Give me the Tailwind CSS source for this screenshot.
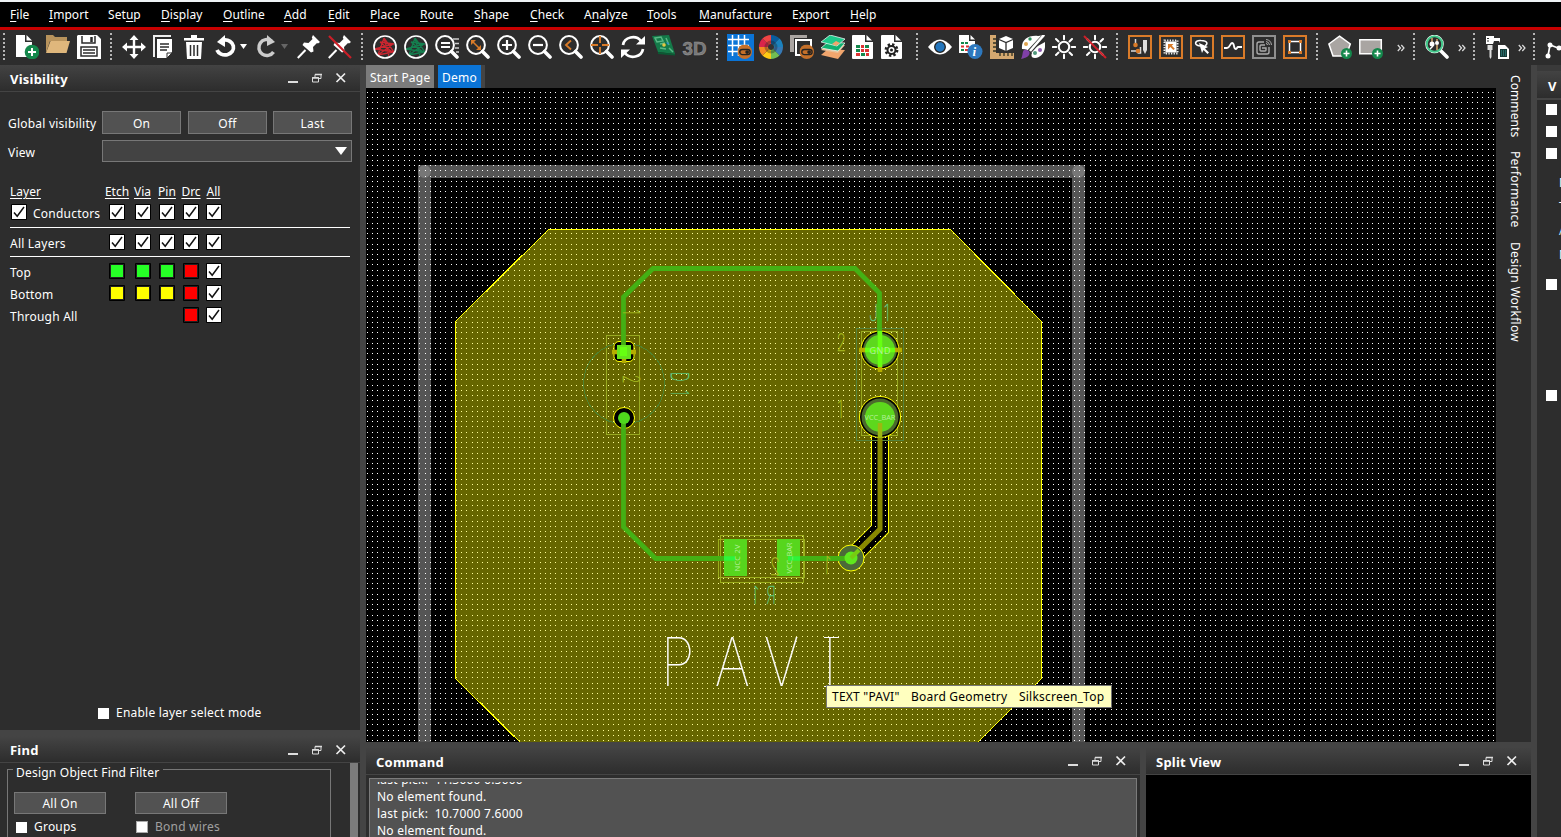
<!DOCTYPE html>
<html lang="en">
<head>
<meta charset="utf-8">
<title>PCB Editor</title>
<script src="https://cdn.jsdelivr.net/npm/@tailwindcss/browser@4"></script>
</head>
<body class="w-[1561px] h-[837px] overflow-hidden bg-[#2d2d2d] text-white text-[12px] leading-[16px] tracking-[0.22px] font-['Noto_Sans','Open_Sans',sans-serif] flex flex-col whitespace-nowrap">

<svg class="hidden">
  <symbol id="chk" viewBox="0 0 16 16"><rect width="16" height="16" rx="1" fill="#000"/><rect x="1" y="1" width="14" height="14" fill="#fff"/><path d="M3 8.500L6.200 12.300L13 3" fill="none" stroke="#111" stroke-width="1.500"/></symbol>
  <symbol id="cg" viewBox="0 0 16 16"><rect width="16" height="16" rx="1"/><rect x="1" y="1" width="14" height="14" fill="#222"/><rect x="2" y="2" width="12" height="12" fill="#26ff26"/></symbol>
  <symbol id="cy" viewBox="0 0 16 16"><rect width="16" height="16" rx="1"/><rect x="1" y="1" width="14" height="14" fill="#222"/><rect x="2" y="2" width="12" height="12" fill="#ff0"/></symbol>
  <symbol id="cr" viewBox="0 0 16 16"><rect width="16" height="16" rx="1"/><rect x="1" y="1" width="14" height="14" fill="#222"/><rect x="2" y="2" width="12" height="12" fill="#f00"/></symbol>
  <symbol id="wc" viewBox="0 0 60 14"><path d="M1 11h10" stroke="#ddd" stroke-width="2"/><path d="M28 3.500h6v4h-6z" fill="none" stroke="#ddd"/><path d="M25.500 6.500h6v4.500h-6z" fill="#333" stroke="#ddd"/><path d="M25 7h7M28 3.500h7" stroke="#ddd" stroke-width="1.500"/><path d="M49.500 2.500l8.500 8.500M58 2.500l-8.500 8.500" stroke="#eee" stroke-width="1.700"/></symbol>
  <symbol id="lens" viewBox="0 0 24 24"><circle cx="10" cy="10" r="8.900" fill="none" stroke="#fff" stroke-width="2"/><path d="M16.500 16.500l5.500 5.500" stroke="#fff" stroke-width="3.600" stroke-linecap="round"/></symbol>
  <symbol id="rats" viewBox="0 0 24 24"><path d="M11 3L5 20L20 9L2 14L21 17L11 3L16 21M7 7l14 2M7 7l12 10M5 20l15-3" fill="none" stroke="currentColor" stroke-width="1.300"/><circle cx="12" cy="12" r="11" fill="none" stroke="#fff" stroke-width="1.700"/></symbol>
  <symbol id="pin" viewBox="0 0 24 24"><path d="M16 0l7 7-2 1.500-1-.5-4 4 .5 4.500-2.500 1L5.500 10 7 7.500l4.500.5 4-4-.7-1.500z" fill="#fff"/><path d="M8.500 15L.8 23" stroke="#fff" stroke-width="2"/></symbol>
  <symbol id="doc" viewBox="0 0 24 24"><path d="M2 0h11v7h8v16q0 1-1 1H1q-1 0-1-1V1q0-1 1-1z" fill="#fff"/><path d="M14.500 0v5.500H20z" fill="#fff"/></symbol>
  <symbol id="plus" viewBox="0 0 12 12"><circle cx="6" cy="6" r="5.500" fill="#14884c"/><path d="M6 3v6M3 6h6" stroke="#fff" stroke-width="1.600"/></symbol>
  <symbol id="eye" viewBox="0 0 14 14"><circle cx="7" cy="7" r="7" fill="#c4702a"/><rect x="2.200" y="4.800" width="10" height="5" rx="2.500" fill="#c4702a" stroke="#222" stroke-width="1.300"/><circle cx="9.300" cy="7.300" r="1.800" fill="#222"/></symbol>
  <symbol id="sun" viewBox="0 0 24 24"><circle cx="12" cy="12" r="5.200" fill="#2d2d2d" stroke="#fff" stroke-width="2"/><path d="M12 .8v3.500M12 19.700v3.500M.8 12h3.500M19.700 12h3.500M4 4l2.500 2.500M17.500 17.500L20 20M20 4l-2.500 2.500M6.500 17.500L4 20" stroke="#fff" stroke-width="2" stroke-linecap="round"/></symbol>
  <symbol id="more" viewBox="0 0 8 8"><path d="M.8 1L3.500 4 .8 7M4.300 1L7 4 4.300 7" fill="none" stroke="#ddd" stroke-width="1.200"/></symbol>
</svg>

<div class="h-[2px] bg-[#eef2f5] shrink-0"></div>
<nav class="h-[25px] bg-black shrink-0 flex items-center pl-[10px] tracking-[0.06px] [&_u]:underline-offset-2">
  <span class="w-[39px]"><u>F</u>ile</span><span class="w-[59px]"><u>I</u>mport</span><span class="w-[53px]">Set<u>u</u>p</span><span class="w-[62px]"><u>D</u>isplay</span><span class="w-[61px]"><u>O</u>utline</span><span class="w-[44px]"><u>A</u>dd</span><span class="w-[42px]"><u>E</u>dit</span><span class="w-[50px]"><u>P</u>lace</span><span class="w-[54px]"><u>R</u>oute</span><span class="w-[56px]"><u>S</u>hape</span><span class="w-[54px]"><u>C</u>heck</span><span class="w-[63px]">A<u>n</u>alyze</span><span class="w-[52px]"><u>T</u>ools</span><span class="w-[93px]"><u>M</u>anufacture</span><span class="w-[58px]">E<u>x</u>port</span><span><u>H</u>elp</span>
</nav>
<div class="h-[3px] bg-[#c80000] shrink-0"></div>

<!-- Toolbar -->
<div class="h-[35px] shrink-0 flex pl-[3px] pt-[3px] overflow-hidden [&>div]:shrink-0 [&>div]:flex [&>div]:gap-[7px] [&>div]:pl-[10px] [&>div]:h-[27px] [&>div]:border-l-2 [&>div]:border-dotted [&>div]:border-[#b5b5b5] [&_svg]:shrink-0 [&_svg]:mt-[2px]">
  <div class="w-[107px]">
    <svg width="24" height="24"><path d="M1 0h9v7h7v15H1z" fill="#fff"/><path d="M11.500 0v5.500H17z" fill="#fff"/><circle cx="17" cy="17" r="7.300" fill="#14884c"/><path d="M17 13v8M13 17h8" stroke="#fff" stroke-width="2"/></svg>
    <svg width="24" height="24"><path d="M0 18V0h7l2 2h12v4H4z" fill="#b8935c"/><path d="M4.500 6H24l-3.500 12H0z" fill="#dfb77c"/></svg>
    <svg width="24" height="24"><path d="M1 0h19l4 4v20H0V1z" fill="#fff"/><path d="M5 1v7h13V1" fill="#fff" stroke="#2d2d2d" stroke-width="1.500"/><path d="M14.500 2v5" stroke="#2d2d2d" stroke-width="2.500"/><path d="M4 12h16v9H4z" fill="#fff" stroke="#2d2d2d" stroke-width="1.500"/><path d="M6 15h12M6 18h12" stroke="#2d2d2d" stroke-width="1.500"/></svg>
  </div>
  <div class="w-[251px]">
    <svg width="24" height="24" viewBox="0 0 24 24"><path d="M12 3v18M3 12h18" stroke="#fff" stroke-width="2.400"/><path d="M12 0l4.500 5h-9zM12 24l4.500-5h-9zM0 12l5-4.500v9zM24 12l-5-4.500v9z" fill="#fff"/></svg>
    <svg width="24" height="24"><path d="M1 22V1h17" fill="none" stroke="#eee" stroke-width="2"/><path d="M4 4h15v13l-5 6H4z" fill="#fff"/><path d="M7 9h9M7 12h9M7 15h7" stroke="#2d2d2d" stroke-width="1.500"/><path d="M14 18h5l-5 5z" fill="#fff" stroke="#2d2d2d"/></svg>
    <svg width="24" height="24"><path d="M0 3h20v2.500H0zM7 0h6v3H7z" fill="#fff"/><path d="M2 7h16l-1 17H3z" fill="#fff"/><path d="M6.500 10v11M10 10v11M13.500 10v11" stroke="#2d2d2d" stroke-width="1.500"/></svg>
    <svg width="34" height="24"><path d="M2 15a8.500 7.500 0 1 0 7-10" fill="none" stroke="#fff" stroke-width="3.700"/><path d="M2 7L10 0v12z" fill="#fff"/><path d="M25 9h7l-3.500 5z" fill="#fff"/></svg>
    <svg width="34" height="24"><path d="M17.500 17a8 8 0 1 1-2-11" fill="none" stroke="#ccc" stroke-width="3.500"/><path d="M19 7l-8-7v11z" fill="#ccc"/><path d="M25 9h7l-3.500 5z" fill="#666"/></svg>
    <svg width="24" height="24"><use href="#pin"/></svg>
    <svg width="24" height="24"><use href="#pin"/><path d="M1 1l22 22" stroke="#cc1f28" stroke-width="2.200"/></svg>
  </div>
  <div class="w-[355px]">
    <svg width="24" height="24" class="text-[#cc2630]"><use href="#rats"/></svg>
    <svg width="24" height="24" class="text-[#14804f]"><use href="#rats"/></svg>
    <svg width="24" height="24"><use href="#lens"/><path d="M6 8h9M6 12h9" stroke="#fff" stroke-width="2"/><path d="M18 4h6M20 8.500h4M20 13h4M21 17h3" stroke="#ccc" stroke-width="1.300"/></svg>
    <svg width="24" height="24"><use href="#lens"/><path d="M6 6l8 8" stroke="#d97b29" stroke-width="1.600"/><path d="M5 5h5l-5 5zM15 15h-5l5-5z" fill="#d97b29"/></svg>
    <svg width="24" height="24"><use href="#lens"/><path d="M10 5v10M5 10h10" stroke="#fff" stroke-width="2.200"/></svg>
    <svg width="24" height="24"><use href="#lens"/><path d="M5 10h10" stroke="#fff" stroke-width="2.200"/></svg>
    <svg width="24" height="24"><use href="#lens"/><path d="M12 5.500L7 10l5 4.500" fill="none" stroke="#d97b29" stroke-width="1.900"/></svg>
    <svg width="24" height="24"><use href="#lens"/><path d="M10 1v7M10 12v7M1 10h7M12 10h7" stroke="#d97b29" stroke-width="1.900"/></svg>
    <svg width="24" height="24"><path d="M2 10A10 9 0 0 1 20 6M22 14A10 9 0 0 1 4 18" fill="none" stroke="#fff" stroke-width="2.700"/><path d="M24 1v8.500h-9zM0 23v-8.500h9z" fill="#fff"/></svg>
    <svg width="24" height="24"><path d="M0 1L17 0l6 19L6 17z" fill="#147a49"/><path d="M6 17l17 2v1.500L6 19z" fill="#0a5a33"/><path d="M3 3l6-1 2 4-6 1zM8 9l5-1M14 3l3 7M17 13l4 4M8 13l6 1" fill="none" stroke="#59b885" stroke-width="1.500"/><circle cx="12" cy="10" r="1.800" fill="#e8c640"/><path d="M14 7l3 1-1 2z" fill="#2a8fd0"/></svg>
    <svg width="24" height="24" class="overflow-visible"><text x="-.5" y="20" font-family="Liberation Sans" font-weight="700" font-size="19" letter-spacing="0" textLength="24" lengthAdjust="spacingAndGlyphs" fill="#777" stroke="#999" stroke-width=".5">3D</text></svg>
  </div>
  <div class="w-[200px]">
    <svg width="24" height="24" class="overflow-visible"><rect x="-1" y="-1" width="27" height="27" fill="#0b74d6"/><path d="M4.500 0v21M10.500 0v21M16.500 0v11M0 4.500h21M0 10.500h21M0 16.500h11" stroke="#fff" stroke-width="1.500"/><use href="#eye" x="9.500" y="9.500" width="14.500" height="14.500"/></svg>
    <svg width="24" height="24" viewBox="-12 -12 24 24"><path d="M0 0V-12A12 12 0 0 1 8.500-8.500z" fill="#0a5c9c"/><path d="M0 0L8.500-8.500A12 12 0 0 1 12 0z" fill="#1b82be"/><path d="M0 0H12A12 12 0 0 1 8.500 8.500z" fill="#3679b5"/><path d="M0 0L8.500 8.500A12 12 0 0 1 0 12z" fill="#72bd54"/><path d="M0 0V12A12 12 0 0 1-8.500 8.500z" fill="#ffc914"/><path d="M0 0L-8.500 8.500A12 12 0 0 1-12 0z" fill="#f58a24"/><path d="M0 0H-12A12 12 0 0 1-8.500-8.500z" fill="#d9254a"/><path d="M0 0L-8.500-8.500A12 12 0 0 1 0-12z" fill="#ef4444"/><circle r="5" fill="none" stroke="#222" stroke-opacity=".35" stroke-width="3"/><circle r="3" fill="#333"/></svg>
    <svg width="24" height="24" class="overflow-visible"><path d="M0 0h17v17H0z" fill="#aaa5a2"/><path d="M4 3h18v18H4z" fill="#2d2d2d"/><path d="M6 5h15v15H6z" fill="#2d2d2d" stroke="#fff" stroke-width="2"/><use href="#eye" x="9.500" y="9.500" width="14.500" height="14.500"/></svg>
    <svg width="24" height="24"><path d="M0 20l7-6 17 1-7 9z" fill="#f0a56d"/><path d="M0 15l7-6 17 1-7 8z" fill="#e8c098"/><path d="M0 13l7-6 17 1-7 8z" fill="#10b070" stroke="#fff" stroke-width=".7"/><path d="M0 7l9-7 15 4-8 7z" fill="#1ec98b" stroke="#fff" stroke-width=".7"/><path d="M11 9l4-3 4 2-4 3z" fill="#f0a56d"/></svg>
    <svg width="24" height="24"><use href="#doc"/><path d="M4 10h4v3H4zM13 10h4v3h-4zM4 14h4v3H4zM9 18h4v3H9z" fill="#14884c"/><path d="M9 10h3v3H9zM9 14h3v3H9zM13 14h4v3h-4zM4 18h4v3H4zM14 18h3v3h-3z" fill="#d33"/></svg>
    <svg width="24" height="24" class="overflow-visible"><g transform="translate(-2 0)"><use href="#doc" width="24" height="24"/><circle cx="10.500" cy="15" r="5.500" fill="none" stroke="#222" stroke-width="2.800" stroke-dasharray="2.300 2"/><circle cx="10.500" cy="15" r="4" fill="none" stroke="#222" stroke-width="2"/><circle cx="10.500" cy="15" r="1.500" fill="#222"/></g></svg>
  </div>
  <div class="w-[200px]">
    <svg width="24" height="24"><path d="M0 12Q12-3 24 12Q12 27 0 12z" fill="#fff"/><circle cx="12" cy="12" r="5.300" fill="#2476bd" stroke="#222" stroke-width="1.300"/></svg>
    <svg width="24" height="24"><path d="M0 0h10v6h6v12H0z" fill="#fff"/><path d="M11.500 0v4.500H16z" fill="#fff"/><path d="M2 7h3v2H2zM6 7h3v2H6zM2 14h3v2H2z" fill="#14884c"/><path d="M2 10.500h3v2H2zM7 10.500h3v2H7zM6 14h3v2H6z" fill="#d33"/><circle cx="16" cy="16.500" r="7.500" fill="#2d78be"/><text x="13.500" y="21" font-family="Liberation Serif" font-weight="700" font-style="italic" font-size="13" fill="#fff">i</text></svg>
    <svg width="24" height="24"><path d="M0 0h6v18h18v6H0z" fill="#d5a970"/><path d="M3 4h3M3 8h3M3 12h3M3 16h3M10 18v3M14 18v3M18 18v3M22 18v3" stroke="#332" stroke-width="1.300"/><path d="M16 1l7 3v9l-7 3-7-3V4z" fill="#fff"/><path d="M9 4.500l7 3 7-3M16 7.500v8.500" fill="none" stroke="#2d2d2d" stroke-width="1.300"/></svg>
    <svg width="24" height="24"><path d="M1 14C0 5 7 0 17 1L24 0 15 12 24 7c1 9-3 15-10 16-4 0-4-3-3-5-3-3-6-4-10-4z" fill="#fff"/><path d="M22 2L8 17" stroke="#2d2d2d" stroke-width="4.500"/><path d="M23 0L9 16" stroke="#fff" stroke-width="2.600"/><circle cx="9" cy="4" r="1.700" fill="#2b8f5c"/><circle cx="5" cy="9" r="2" fill="#e0a54f"/><circle cx="19" cy="15" r="2" fill="#8c59ae"/><circle cx="14" cy="18" r="2" fill="#4f987b"/><path d="M3 15c4-1 7 2 5 5-2 3-5 3-8 4 2-3 1-7 3-9z" fill="#8040a8"/></svg>
    <svg width="24" height="24"><use href="#sun"/></svg>
    <svg width="24" height="24"><use href="#sun"/><path d="M1 1l22 22" stroke="#cc1f28" stroke-width="2"/></svg>
  </div>
  <div class="w-[200px]">
    <svg width="24" height="24"><rect x="1" y="1" width="22" height="22" fill="none" stroke="#d97b29" stroke-width="2"/><path d="M7.500 4v6M3 16h6M12.500 12v6h-3" stroke="#ddd" stroke-width="1.500" fill="none"/><circle cx="7.500" cy="10" r="2.300" fill="#d97b29"/><circle cx="10" cy="16" r="2.300" fill="#d97b29"/><path d="M15 5h4v10l-2 4-2-4z" fill="#ddd"/></svg>
    <svg width="24" height="24"><rect x="1" y="1" width="22" height="22" fill="none" stroke="#d97b29" stroke-width="2"/><rect x="6.500" y="6.500" width="11" height="11" fill="#fff"/><rect x="5.500" y="5.500" width="13" height="13" fill="none" stroke="#eee" stroke-width="2" stroke-dasharray="1.300 1.300"/><path d="M9 9h5.500l-1.700 1.700 3 3-1.400 1.400-3-3L9 14.500z" fill="#d97b29"/></svg>
    <svg width="24" height="24"><rect x="1" y="1" width="22" height="22" fill="none" stroke="#d97b29" stroke-width="2"/><path d="M10 11C3 10 5 5 11 5.500c7 0 7 4 4 5" fill="none" stroke="#fff" stroke-width="1.500"/><path d="M9 8l9 4-3 1.500 4 4-1.500 1.500-4-4-1.500 3z" fill="#fff"/></svg>
    <svg width="24" height="24"><rect x="1" y="1" width="22" height="22" fill="none" stroke="#d97b29" stroke-width="2"/><path d="M3 13h3c3 0 3-5 5-5 3 0 1 6 4 6 1 0 1-2 2-2h4" fill="none" stroke="#fff" stroke-width="1.800"/></svg>
    <svg width="24" height="24"><rect x="1" y="1" width="22" height="22" fill="none" stroke="#8f8f8f" stroke-width="2"/><path d="M12 7H7q-2 0-2 2v8q0 2 2 2h8q2 0 2-2v-5M13 10H9q-1 0-1 1v4q0 1 1 1h4q1 0 1-1v-2h-4" fill="none" stroke="#aaa" stroke-width="1.400"/><path d="M14 8.500q1.500 0 1.500 1.500M14 6.500q3 .3 3.500 3.500M14 4.500q5 .5 5.500 5.500" fill="none" stroke="#aaa" stroke-width="1"/></svg>
    <svg width="24" height="24"><rect x="1" y="1" width="22" height="22" fill="none" stroke="#d97b29" stroke-width="2"/><rect x="6.500" y="6.500" width="11" height="11" fill="none" stroke="#fff" stroke-width="1.500"/><path d="M5 5h3v3H5zM16 5h3v3h-3zM5 16h3v3H5zM16 16h3v3h-3z" fill="#d97b29"/></svg>
  </div>
  <div class="w-[97px]">
    <svg width="24" height="24"><path d="M11.500 1.200L22.300 9 18 21H5L.9 9z" fill="#a9a5a2" stroke="#fff" stroke-width="1.500"/><use href="#plus" x="12.500" y="12.500" width="12" height="12"/></svg>
    <svg width="24" height="24"><path d="M.8 4.800h21.500v14H.8z" fill="#a9a5a2" stroke="#fff" stroke-width="1.500"/><use href="#plus" x="12.500" y="12.500" width="12" height="12"/></svg>
    <svg width="8" height="8" class="translate-y-[9px] ml-[7px]"><use href="#more"/></svg>
  </div>
  <div class="w-[60px]">
    <svg width="24" height="24"><path d="M16 16l6 6" stroke="#fff" stroke-width="3.600" stroke-linecap="round"/><circle cx="9.500" cy="9" r="8.300" fill="#2d2d2d" stroke="#fff" stroke-width="2"/><circle cx="9.500" cy="9" r="7.800" fill="none" stroke="#42c98b" stroke-width="2"/><path d="M7 3v5M12 4v4M12 10v5" stroke="#d5a970" stroke-width="1.500"/><circle cx="7" cy="9" r="2.500" fill="#fff"/><circle cx="12" cy="8" r="2" fill="#fff"/><path d="M5 14l3-3" stroke="#fff" stroke-width="1.500"/></svg>
    <svg width="8" height="8" class="translate-y-[9px] ml-[2px]"><use href="#more"/></svg>
  </div>
  <div class="w-[60px]">
    <svg width="24" height="24"><path d="M1 1h8v2h6v5l-1-2H9l-1 3H1z" fill="#fff"/><path d="M2 3.500h2M2 6h2" stroke="#333"/><path d="M2.500 10h5v5h-1v7l-1 2-1-2v-7h-2z" fill="#ddd"/><path d="M13 10h7l4 4v10H13z" fill="#fff"/><path d="M15 14h7v8h-7z" fill="#173c3a"/><path d="M16 16h5M16 18h5M16 20h5" stroke="#3c9c98" stroke-dasharray="1 1"/></svg>
    <svg width="8" height="8" class="translate-y-[9px] ml-[2px]"><use href="#more"/></svg>
  </div>
  <div class="w-[60px]">
    <svg width="24" height="24"><path d="M3 21L5 10l8 3h11" fill="none" stroke="#fff" stroke-width="1.700"/><circle cx="3" cy="21" r="2.500" fill="#fff"/><circle cx="5" cy="10" r="2.500" fill="#fff"/><circle cx="14" cy="13" r="2.500" fill="#fff"/></svg>
  </div>
</div>

<div class="flex flex-1 min-h-0">
  <!-- Left dock -->
  <aside class="w-[360px] shrink-0 flex flex-col">
    <header class="h-[27px] shrink-0 bg-gradient-to-b from-[#434343] to-[#2d2d2d] border-b border-[#444] flex items-center justify-between pl-[10px] pr-[13px] font-bold text-[13px]"><span class="pt-[2px]">Visibility</span><svg width="60" height="14"><use href="#wc"/></svg></header>
    <section class="h-[638px] shrink-0 flex flex-col pt-[19px]">
      <div class="flex pl-[8px] h-[23px] items-center [&>b]:font-normal [&>b]:h-[23px] [&>b]:border [&>b]:border-[#777] [&>b]:bg-[#525252] [&>b]:flex [&>b]:items-center [&>b]:justify-center [&>b]:pt-[2px]"><span class="w-[94px] pt-[2px]">Global visibility</span><b class="w-[79px]">On</b><b class="w-[79px] ml-[7px]">Off</b><b class="w-[79px] ml-[6px]">Last</b></div>
      <div class="flex pl-[8px] h-[22px] mt-[6px] items-center"><span class="w-[94px] pt-[4px]">View</span><div class="w-[250px] h-[22px] border border-[#777] bg-[#434343] flex justify-end items-center pr-[4px]"><svg width="12" height="8"><path d="M0 0h12L6 8z" fill="#fff"/></svg></div></div>
      <div class="mt-[20px] pl-[10px] pr-[10px] [&>div]:grid [&>div]:grid-cols-[94px_26px_25px_24px_24px_21px] [&>div]:items-center [&>div]:justify-items-center [&>div>*:first-child]:justify-self-start [&_svg]:w-4 [&_svg]:h-4 [&_u]:underline-offset-2">
        <div class="h-[20px] tracking-[0px]"><u>Layer</u><u>Etch</u><u>Via</u><u>Pin</u><u>Drc</u><u>All</u></div>
        <div class="h-[20px]"><span class="flex items-center gap-[6px] pl-px"><svg><use href="#chk"/></svg><span class="pt-[3px]">Conductors</span></span><svg><use href="#chk"/></svg><svg><use href="#chk"/></svg><svg><use href="#chk"/></svg><svg><use href="#chk"/></svg><svg><use href="#chk"/></svg></div>
        <hr class="border-white mt-[5px]">
        <div class="h-[28px]"><span class="pt-[3px]">All Layers</span><svg><use href="#chk"/></svg><svg><use href="#chk"/></svg><svg><use href="#chk"/></svg><svg><use href="#chk"/></svg><svg><use href="#chk"/></svg></div>
        <hr class="border-white mb-[3px]">
        <div class="h-[22px]"><span class="pt-[3px]">Top</span><svg><use href="#cg"/></svg><svg><use href="#cg"/></svg><svg><use href="#cg"/></svg><svg><use href="#cr"/></svg><svg><use href="#chk"/></svg></div>
        <div class="h-[22px]"><span class="pt-[3px]">Bottom</span><svg><use href="#cy"/></svg><svg><use href="#cy"/></svg><svg><use href="#cy"/></svg><svg><use href="#cr"/></svg><svg><use href="#chk"/></svg></div>
        <div class="h-[22px]"><span class="pt-[3px]">Through All</span><i></i><i></i><i></i><svg><use href="#cr"/></svg><svg><use href="#chk"/></svg></div>
      </div>
      <div class="mt-auto mb-[9px] pl-[98px] flex items-center gap-[7px]"><i class="w-[11px] h-[11px] bg-white"></i><span>Enable layer select mode</span></div>
    </section>
    <header class="h-[33px] shrink-0 bg-gradient-to-b from-[#444] from-20% to-[#2d2d2d] border-b border-[#444] flex items-center justify-between pl-[10px] pr-[13px] pt-[7px] font-bold text-[13px]"><span class="pt-px">Find</span><svg width="60" height="14"><use href="#wc"/></svg></header>
    <section class="flex-1 min-h-0 flex overflow-hidden">
      <div class="ml-[7px] mt-[6px] w-[324px] h-[100px] border border-[#777] px-[6px]">
        <div class="w-[150px] -ml-px pl-[3px] -mt-[5px] bg-[#2d2d2d]">Design Object Find Filter</div>
        <div class="flex gap-[29px] mt-[11px] [&>b]:w-[92px] [&>b]:h-[22px] [&>b]:font-normal [&>b]:border [&>b]:border-[#777] [&>b]:bg-[#525252] [&>b]:flex [&>b]:items-center [&>b]:justify-center [&>b]:pt-[2px]"><b>All On</b><b>All Off</b></div>
        <div class="flex items-center mt-[5px] pl-[2px]"><i class="w-[11px] h-[11px] bg-white"></i><span class="ml-[7px] w-[102px]">Groups</span><i class="w-[12px] h-[12px] bg-white border border-[#aaa]"></i><span class="ml-[7px] text-[#a0a0a0]">Bond wires</span></div>
      </div>
      <div class="ml-[19px] w-[8px] bg-[#7b7b7b]"></div>
    </section>
  </aside>
  <div class="w-[6px] shrink-0 bg-[#444]"></div>

  <!-- Centre -->
  <main class="w-[1165px] shrink-0 flex flex-col">
    <div class="flex h-[677px] shrink-0">
      <div class="w-[1130px] flex flex-col">
        <div class="flex h-[23px] shrink-0"><span class="w-[68px] bg-[#7b7b7b] pl-[4px] leading-[25px]">Start Page</span><span class="ml-[4px] w-[43px] bg-[#0b74d6] pl-[4px] leading-[25px]">Demo</span><span class="w-[4px] bg-[#444]"></span></div>
        <div class="relative h-[654px] bg-black">
          <svg id="board" width="1130" height="654" viewBox="366 88 1130 654" fill="none" class="block">
            <path d="M424.500 760V171.500H1078.500V760" stroke="#555" stroke-width="13"/>
            <circle cx="424.500" cy="171.500" r="6.500" fill="#777"/><circle cx="1078.500" cy="171.500" r="6.500" fill="#777"/>
            <path d="M548.500 229.500H950.500L1041.500 321.500V678.500L960 760H538L455.500 678.500V321.500Z" fill="#660" stroke="#ff0" shape-rendering="crispEdges"/>
            <!-- cleared channel and its centre trace -->
            <path d="M880 425V529L851 558" stroke="#ff0" stroke-width="18"/>
            <path d="M880 425V529L851 558" stroke="#000" stroke-width="16"/>
            <path id="dots" fill="#fff" shape-rendering="crispEdges"/>
            <path id="dotsY" fill="#ffff99" shape-rendering="crispEdges"/>
            <g shape-rendering="crispEdges">
              <path d="M606.500 335.500h33v99h-33z" stroke="#9a2"/><circle cx="624" cy="383.500" r="40.500" stroke="#4f8433"/>
              <path d="M856.500 328.500h47v112h-47z" stroke="#548440"/><path d="M861.500 331.500h36v104h-36z" stroke="#9a2"/>
              <path d="M718.500 539.500h86v38h-86zM720.500 535.500h83v47h-83z" stroke="#9cae1e"/>
            </g>
            <path d="M880 425V529L851 558" stroke="#880" stroke-width="5"/>
            <rect x="614" y="341.500" width="20" height="20" rx="5" fill="#000" stroke="#ff0"/>
            <circle cx="880" cy="350" r="19" fill="#000" stroke="#ff0"/><circle cx="880" cy="350" r="17" fill="#4c6a2c"/>
            <circle cx="880" cy="417" r="20.500" fill="#000" stroke="#ff0"/><circle cx="880" cy="417" r="18.500" fill="#4c6a2c"/>
            <circle cx="624" cy="418" r="10.500" fill="#000" stroke="#ff0"/>
            <circle cx="851" cy="558" r="13" fill="#4c6a38" stroke="#ff0"/>
            <path d="M612 352h24M624 345v18M859 350h43M880 340v32" stroke="#b5ad00" stroke-width="4.500"/>
            <path d="M879.500 352V293L855 268.500H653L623.500 297V352M623.500 423V527L655.500 558.500H735M788 558.500H851" stroke="#44b014" stroke-width="4.800"/>
            <path d="M617 345h14v14h-14z" fill="#66e31c"/><path d="M620 347h7v9h-7z" fill="#6f1"/>
            <circle cx="624" cy="418" r="6" fill="#4fd61d"/>
            <circle cx="880" cy="350" r="15" fill="#5dd81d"/><circle cx="880" cy="417" r="15" fill="#5dd81d"/>
            <path d="M880 331v36M865 350h30" stroke="#6f1" stroke-width="4.500"/><path d="M880 423v15" stroke="#9cb810" stroke-width="4.500"/>
            <circle cx="851" cy="558" r="6.500" fill="#5fe81d"/><path d="M851 558l8-8" stroke="#7c1" stroke-width="4"/>
            <path d="M724 539h23v37h-23zM777 539h23v37h-23z" fill="#57d61d"/><path d="M724 558.500h11M788 558.500h12" stroke="#2ef43a" stroke-width="4.600"/>
            <g font-family="Open Sans, sans-serif" letter-spacing="0" fill="#b4f09c" text-anchor="middle">
              <text x="880" y="353.500" font-size="9" textLength="21">GND</text>
              <text x="880" y="420" font-size="7.500" textLength="31">VCC_BAR</text>
              <text transform="translate(739.500 558) rotate(-90)" font-size="7.500" textLength="27">NCC 2V</text>
              <text transform="translate(792 558) rotate(-90)" font-size="7.500" textLength="31">VCC_BAR</text>
            </g>
            <g font-family="Inter, sans-serif" font-weight="100">
              <g fill="#5fc276" stroke="#5fc276" stroke-width=".6">
                <text transform="translate(869 321) scale(.7 1)" font-size="23" x="0 21">J1</text>
                <text transform="translate(670.500 372) rotate(90) scale(.55 1)" font-size="24" x="0 33">D1</text>
                <text transform="translate(776 604) scale(-.65 1)" font-size="24" x="0 26">R1</text>
              </g>
              <g fill="#a3b61f" stroke="#a3b61f" stroke-width=".6">
                <text transform="translate(836.500 351) scale(.65 1)" font-size="24">2</text>
                <text transform="translate(837 418) scale(.7 1)" font-size="24">1</text>
                <text transform="translate(623 309) rotate(90) scale(.7 1)" font-size="23">1</text>
                <text transform="translate(623 375) rotate(90) scale(.6 1)" font-size="23">2</text>
                <text transform="translate(831 574) scale(-.7 1)" font-size="24">1</text>
                <text transform="translate(780 575) scale(-.7 1)" font-size="24">2</text>
              </g>
              <text transform="translate(661 686) scale(.82 1)" x="0 65.500 125.600 197.500" font-size="67" fill="#fff" stroke="#fff" stroke-width=".2">PAVI</text>
            </g>
            <path d="M824 637.500h15M824 686.500h8" stroke="#fff"/>
          </svg>
          <div class="absolute left-[460px] top-[597px] w-[286px] h-[23px] bg-[#ffffbf] border border-[#767676] text-black leading-[21px] pl-[5px] flex"><span class="w-[79px]">TEXT "PAVI"</span><span class="w-[108px]">Board Geometry</span><span>Silkscreen_Top</span></div>
        </div>
      </div>
      <div class="w-[35px] flex flex-col items-center pl-[3px] pt-[10px] gap-[14px] tracking-[0.3px] [&>span]:[writing-mode:vertical-rl]"><span class="tracking-[0.1px]">Comments</span><span>Performance</span><span>Design Workflow</span></div>
    </div>
    <div class="h-[6px] bg-[#444] shrink-0"></div>
    <div class="flex flex-1 min-h-0">
      <section class="w-[774px] flex flex-col">
        <header class="h-[27px] shrink-0 bg-gradient-to-b from-[#434343] to-[#2d2d2d] border-b border-[#444] flex items-center justify-between pl-[10px] pr-[13px] font-bold text-[13px]"><span class="pt-[2px]">Command</span><svg width="60" height="14"><use href="#wc"/></svg></header>
        <div class="mt-[3px] ml-[3px] mr-[3px] flex-1 min-h-0 border border-b-0 border-[#7b7b7b] bg-[#525252] pt-[3px] pl-[7px]"><div class="h-full overflow-hidden leading-[17px]"><div class="-mt-[11px]">last pick:&nbsp; 11.3000 6.5000</div><div>No element found.</div><div>last pick:&nbsp; 10.7000 7.6000</div><div>No element found.</div></div></div>
      </section>
      <div class="w-[6px] bg-[#444]"></div>
      <section class="w-[385px] flex flex-col">
        <header class="h-[27px] shrink-0 bg-gradient-to-b from-[#434343] to-[#2d2d2d] border-b border-[#444] flex items-center justify-between pl-[10px] pr-[13px] font-bold text-[13px]"><span class="pt-[2px]">Split View</span><svg width="60" height="14"><use href="#wc"/></svg></header>
        <div class="flex-1 bg-black"></div>
      </section>
    </div>
  </main>
  <div class="w-[6px] shrink-0 bg-[#444]"></div>
  <aside class="w-[24px] shrink-0 overflow-hidden">
    <div class="h-[6px] bg-[#3a3a3a]"></div>
    <header class="h-[29px] bg-gradient-to-b from-[#434343] to-[#2d2d2d] border-b-2 border-[#444] pl-[11px] leading-[30px] font-bold text-[13px]">V</header>
    <div class="pl-[9px] [&>i]:block [&>i]:w-[11px] [&>i]:h-[11px] [&>i]:bg-white pt-[4px]">
      <i></i><i class="mt-[11px]"></i><i class="mt-[11px]"></i>
      <div class="h-[120px] pl-[13px] pt-[12px] leading-[24px] overflow-hidden"><div>N</div><div>T</div><div class="text-sky-200">A</div><div>N</div></div>
      <i></i><i class="mt-[100px]"></i>
    </div>
  </aside>
</div>

<script>
// Placement grid: one-pixel dots, tinted where they fall on the copper pour
const pitchX = 5.237, pitchY = 5.226, x0 = 367.4, y0 = 92.5;
let plain = '', tinted = '';
for (let y = y0; y < 742; y += pitchY) for (let x = x0; x < 1496; x += pitchX) {
  const px = Math.floor(x), py = Math.floor(y);
  const inset = Math.max(0, 321 - py, py - 678);
  const d = `M${px} ${py}h1v1h-1z`;
  if (py > 229 && px > 455 + inset && px < 1042 - inset) tinted += d; else plain += d;
}
document.getElementById('dots').setAttribute('d', plain);
document.getElementById('dotsY').setAttribute('d', tinted);
</script>
</body>
</html>
